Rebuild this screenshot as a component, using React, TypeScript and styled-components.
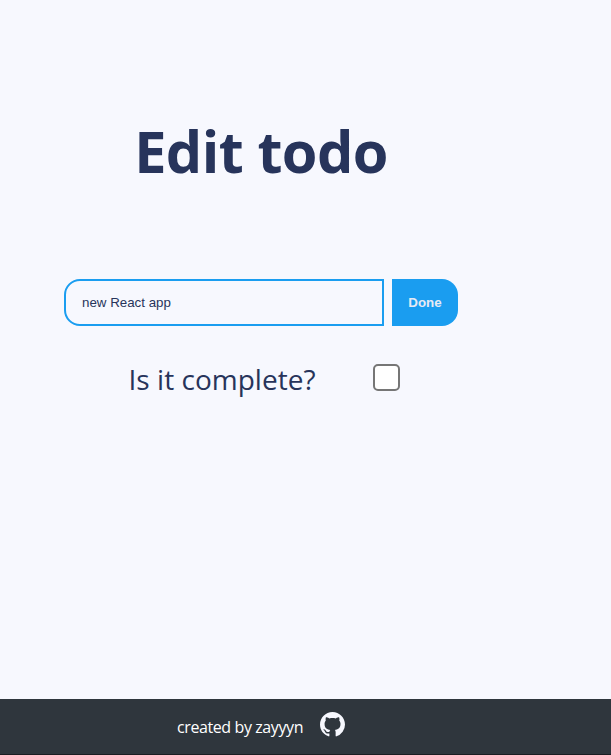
import React, { useState } from "react";
import styled, { createGlobalStyle } from "styled-components";
import { BsGithub } from "react-icons/bs";

const GlobalStyle = createGlobalStyle`
  * { box-sizing: border-box; }
  html, body { margin: 0; padding: 0; }
  body {
    background: #f7f8fe;
    color: #27345b;
    font-family: "Segoe UI", "Open Sans", "Noto Sans", sans-serif;
    overflow: hidden;
  }
`;

const Page = styled.div`
  display: flex;
  flex-direction: column;
  height: 755px;
`;

const Main = styled.main`
  flex: 1;
  width: 522px;
  display: flex;
  flex-direction: column;
  align-items: center;
  padding-top: 111px;
`;

const Title = styled.h1`
  margin: 0 0 88px;
  height: 80px;
  line-height: 80px;
  font-size: 57.6px;
  font-weight: 700;
  letter-spacing: -0.6px;
  white-space: nowrap;
`;

const Form = styled.form`
  display: flex;
  gap: 8px;
  height: 47px;
`;

const TextInput = styled.input`
  width: 320px;
  height: 47px;
  padding: 0 16px;
  border: 2px solid #1a9df0;
  border-radius: 16px 0 0 16px;
  background: transparent;
  color: #27345b;
  font: 13.333px "Liberation Sans", Arial, sans-serif;
  outline: none;
`;

const DoneButton = styled.button`
  width: 66px;
  height: 47px;
  padding: 0;
  border: 0;
  border-radius: 0 16px 16px 0;
  background: #1a9df0;
  color: #e6eaf4;
  font: bold 13.333px "Liberation Sans", Arial, sans-serif;
`;

const CompleteRow = styled.label`
  display: flex;
  align-items: flex-start;
  width: 271px;
  margin: 34px 0 0 6px;
`;

const Question = styled.span`
  width: 244px;
  height: 40px;
  line-height: 38px;
  font-size: 28px;
  font-weight: 400;
  letter-spacing: 0.03px;
  white-space: nowrap;
`;

const Checkbox = styled.input`
  appearance: none;
  flex: none;
  width: 27px;
  height: 27px;
  margin: 4px 0 0;
  border: 2px solid #767676;
  border-radius: 5px;
  background: #fff;
  &:checked { background: #1a9df0; }
`;

const Footer = styled.footer`
  height: 56px;
  background: #2f363d;
  border-bottom: 1px solid #1b1d22;
`;

const Credit = styled.div`
  display: flex;
  width: 522px;
  padding-left: 177px;
`;

const Author = styled.span`
  width: 143px;
  margin-top: 16px;
  line-height: 24px;
  font-size: 16px;
  letter-spacing: -0.4px;
  color: #fff;
  white-space: nowrap;
`;

const GithubIcon = styled(BsGithub)`
  width: 25px;
  height: 25px;
  margin-top: 13px;
  color: #f7f8fe;
`;

export default function App() {
  const [text, setText] = useState("new React app");
  const [complete, setComplete] = useState(false);
  return (
    <Page>
      <GlobalStyle />
      <Main>
        <Title>Edit todo</Title>
        <Form onSubmit={(e) => e.preventDefault()}>
          <TextInput value={text} onChange={(e) => setText(e.target.value)} />
          <DoneButton type="submit">Done</DoneButton>
        </Form>
        <CompleteRow>
          <Question>Is it complete?</Question>
          <Checkbox
            type="checkbox"
            checked={complete}
            onChange={(e) => setComplete(e.target.checked)}
          />
        </CompleteRow>
      </Main>
      <Footer>
        <Credit>
          <Author>created by zayyyn</Author>
          <GithubIcon />
        </Credit>
      </Footer>
    </Page>
  );
}
